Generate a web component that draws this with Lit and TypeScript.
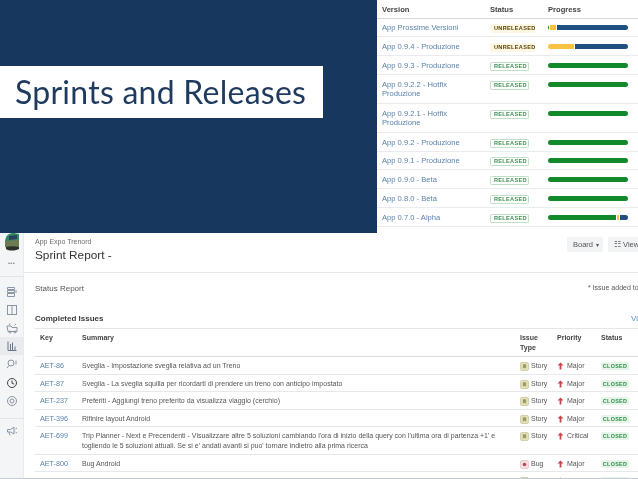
import { LitElement, html, css, svg } from "lit";
import { customElement } from "lit/decorators.js";

type Seg = [string, number];
const G = "#14892c", Y = "#f6c342", B = "#205081";
const releases: { name: string[]; status: string; segs: Seg[] }[] = [
  { name: ["App Prossime Versioni"], status: "UNRELEASED", segs: [[G, 1], ["#fff", 1], [Y, 6], ["#fff", 1], [B, 71]] },
  { name: ["App 0.9.4 - Produzione"], status: "UNRELEASED", segs: [[Y, 26], ["#fff", 1], [B, 53]] },
  { name: ["App 0.9.3 - Produzione"], status: "RELEASED", segs: [[G, 80]] },
  { name: ["App 0.9.2.2 - Hotfix", "Produzione"], status: "RELEASED", segs: [[G, 80]] },
  { name: ["App 0.9.2.1 - Hotfix", "Produzione"], status: "RELEASED", segs: [[G, 80]] },
  { name: ["App 0.9.2 - Produzione"], status: "RELEASED", segs: [[G, 80]] },
  { name: ["App 0.9.1 - Produzione"], status: "RELEASED", segs: [[G, 80]] },
  { name: ["App 0.9.0 - Beta"], status: "RELEASED", segs: [[G, 80]] },
  { name: ["App 0.8.0 - Beta"], status: "RELEASED", segs: [[G, 80]] },
  { name: ["App 0.7.0 - Alpha"], status: "RELEASED", segs: [[G, 68], ["#fff", 1], [Y, 2], ["#fff", 1], [B, 8]] },
];

const issues = [
  { key: "AET-86", sum: ["Sveglia - Impostazione sveglia relativa ad un Treno"], type: "Story", pri: "Major" },
  { key: "AET-87", sum: ["Sveglia - La sveglia squilla per ricordarti di prendere un treno con anticipo impostato"], type: "Story", pri: "Major" },
  { key: "AET-237", sum: ["Preferiti - Aggiungi treno preferito da visualizza viaggio (cerchio)"], type: "Story", pri: "Major" },
  { key: "AET-396", sum: ["Rifinire layout Android"], type: "Story", pri: "Major" },
  { key: "AET-699", sum: ["Trip Planner - Next e Precendenti - Visualizzare altre 5 soluzioni cambiando l'ora di inizio della query con l'ultima ora di partenza +1' e", "togliendo le 5 soluzioni attuali. Se si e' andati avanti si puo' tornare indietro alla prima ricerca"], type: "Story", pri: "Critical" },
  { key: "AET-800", sum: ["Bug Android"], type: "Bug", pri: "Major" },
  { key: "AET-844", sum: ["Test UI/UX"], type: "Story", pri: "Major" },
];

const navIcon = (body: unknown, active = false) => html`<div class="nav ${active ? "active" : ""}"><svg width="14" height="14" viewBox="0 0 14 14" fill="none" stroke="#8b95a3" stroke-width="1">${body}</svg></div>`;

@customElement("app-root")
export class AppRoot extends LitElement {
  static styles = css`
    :host { display: block; width: 638px; height: 479px; overflow: hidden; background: #fff; font-family: "Liberation Sans", Arial, sans-serif; }
    .top { display: flex; height: 233px; background: #17375e; }
    .hero { flex: 1; padding-top: 66px; }
    .title { width: 323px; height: 52px; box-sizing: border-box; background: #fff; padding-left: 15px; font: 32px/51px Lato, sans-serif; letter-spacing: 0.25px; color: #1f3a5f; white-space: nowrap; filter: blur(0.2px); }
    .rel { width: 261px; background: #fff; box-sizing: border-box; overflow: hidden; filter: blur(0.5px); }
    .r { display: grid; grid-template-columns: 108px 58px 80px; padding-left: 5px; border-bottom: 1px solid #e9ebee; box-sizing: border-box; height: 18.8px; font-size: 7.6px; line-height: 9.5px; color: #5a82ad; padding-top: 4.7px; }
    .r.tall { height: 29px; }
    .r.head { height: 18.5px; font-weight: bold; color: #444; border-bottom-color: #d5d8dc; }
    .vname span { display: block; }
    .badge { display: inline-block; height: 9px; line-height: 9px; font-size: 5.6px; font-weight: bold; letter-spacing: 0.3px; box-sizing: border-box; padding: 0 0 0 4px; border-radius: 1.5px; white-space: nowrap; }
    .RELEASED { width: 39px; border: 1px solid #bfdec5; color: #3f8f50; line-height: 7px; padding-left: 3px; }
    .UNRELEASED { width: 45px; background: #fdf8e6; color: #594300; }
    .bar { display: flex; height: 5px; margin-top: 2px; border-radius: 2.5px; overflow: hidden; }
    .bar i { display: block; height: 100%; }
    .bottom { display: flex; height: 246px; box-sizing: border-box; border-bottom: 1.5px solid #c5ccd3; filter: blur(0.5px); background: #fff; overflow: hidden; }
    .side { width: 24px; flex: none; background: #f4f5f7; border-right: 1px solid #e8eaed; box-sizing: border-box; display: flex; flex-direction: column; align-items: center; }
    .avatar { height: 18px; flex: none; }
    .dots { height: 26px; flex: none; box-sizing: border-box; padding-top: 8px; font-size: 6px; line-height: 8px; letter-spacing: 0.3px; color: #8a8f96; font-weight: bold; align-self: stretch; text-align: center; border-bottom: 1px solid #e3e5e8; }
    .nav { height: 18.1px; width: 100%; display: flex; align-items: center; justify-content: center; }
    .nav.active { background: #e9ebef; }
    .navs { padding-top: 6px; width: 100%; padding-bottom: 8px; border-bottom: 1px solid #e3e5e8; }
    .speak { padding-top: 3px; width: 100%; }
    .main { width: 620px; flex: none; overflow: hidden; }
    .phead { display: flex; justify-content: space-between; height: 40px; box-sizing: border-box; padding: 4px 0 0 11px; border-bottom: 1px solid #e6e8eb; }
    .crumb { font-size: 7px; line-height: 9px; color: #6b6b6b; }
    .h1 { font-size: 11.8px; line-height: 18px; color: #333; }
    .btns { display: flex; gap: 5px; }
    .btn { height: 15px; width: 36px; background: #f2f3f5; border-radius: 2px; font-size: 7.5px; line-height: 15px; color: #555; padding: 0 6px; box-sizing: border-box; display: flex; gap: 3px; align-items: center; white-space: nowrap; }
    .sub { display: flex; justify-content: space-between; height: 31px; box-sizing: border-box; padding: 11px 4px 0 11px; font-size: 8px; line-height: 10px; color: #555; }
    .note { font-size: 7px; width: 52px; white-space: nowrap; overflow: hidden; margin-top: -1px; }
    .sechead { display: flex; justify-content: space-between; height: 25px; box-sizing: border-box; margin-left: 11px; padding-top: 10px; font-size: 8px; line-height: 10px; font-weight: bold; color: #3a3a3a; border-bottom: 1px solid #e4e6e9; }
    .sechead a { font-weight: normal; color: #5a8fbb; width: 13px; overflow: hidden; }
    .table { margin-left: 11px; }
    .t { display: grid; grid-template-columns: 42px 438px 37px 44px 38px; padding-left: 5px; box-sizing: border-box; height: 17.5px; border-bottom: 1px solid #e6e8eb; font-size: 7px; line-height: 10px; color: #555; padding-top: 4px; }
    .t.tall { height: 27.5px; }
    .t.head { height: 28px; font-weight: bold; color: #444; border-bottom: 1px solid #d8dbdf; }
    .k { color: #5a82ad; font-size: 7.2px; }
    .s { white-space: nowrap; }
    .s span { display: block; }
    .ic { display: flex; align-items: flex-start; gap: 3px; }
    .ic.ty { gap: 2px; }
    .ic svg { margin-top: 1px; flex: none; }
    .lz { display: inline-block; height: 8px; width: 28px; background: #e7f4ea; border-radius: 1.5px; font-size: 5.4px; line-height: 8px; font-weight: bold; color: #2f8f45; text-align: center; letter-spacing: 0.3px; margin-top: 1px; }
  `;

  private story() {
    return svg`<rect x="0.5" y="0.5" width="7" height="7" rx="1" fill="#e6e4b8" stroke="#bdbb92" stroke-width="0.6"/><path d="M2.5 2h3v4L4 5 2.5 6z" fill="#9a9a6a"/>`;
  }
  private bug() {
    return svg`<rect x="0.5" y="0.5" width="7" height="7" rx="1" fill="#f5e3e3" stroke="#ddb9b9" stroke-width="0.6"/><circle cx="4" cy="4" r="1.6" fill="#c8434a"/>`;
  }

  render() {
    return html`
      <section class="top">
        <div class="hero"><div class="title">Sprints and Releases</div></div>
        <div class="rel">
          <div class="r head"><span>Version</span><span>Status</span><span>Progress</span></div>
          ${releases.map(r => html`<div class="r ${r.name.length > 1 ? "tall" : ""}">
            <div class="vname">${r.name.map(n => html`<span>${n}</span>`)}</div>
            <div><span class="badge ${r.status}">${r.status}</span></div>
            <div class="bar">${r.segs.map(([c, w]) => html`<i style="background:${c};width:${w}px"></i>`)}</div>
          </div>`)}
        </div>
      </section>
      <section class="bottom">
        <aside class="side">
          <svg class="avatar" width="16" height="18" viewBox="0 0 16 18">
            <path d="M1 8 C2 1 6 0 10 0 L15 1 L15 8Z" fill="#2f8a60"/>
            <path d="M5 3 L13 2 L13 6 L5 7Z" fill="#2c3f66"/>
            <path d="M1 8 L15 7 L15 14 C11 16 5 16 1 14Z" fill="#6f7a54"/>
            <path d="M2 14 C6 13 11 13 15 14 L15 16 C10 18 5 18 2 16Z" fill="#2b3128"/>
          </svg>
          <div class="dots">•••</div>
          <div class="navs">
            ${navIcon(svg`<path d="M2.5 2.5h7v2h-7zM2.5 5.5h7v2h-7zM2.5 8.5h7v3h-7zM11 5v3"/>`)}
            ${navIcon(svg`<rect x="2.5" y="2.5" width="9" height="9"/><path d="M7 2.5v9"/>`)}
            ${navIcon(svg`<path d="M2 5h4l1 1.5h5v4H3zM4 4l1-1.5M9.5 4.5 11 3"/><circle cx="5" cy="11" r="1"/><circle cx="10" cy="11" r="1"/>`)}
            ${navIcon(svg`<path d="M3 2.5v9h8.5M5.5 11V5M7.5 11V3.5M10 11V7.5" stroke="#6a7688"/>`, true)}
            ${navIcon(svg`<circle cx="6" cy="6" r="3"/><path d="M4 8.5 2 11M11 3.5v4"/>`)}
            ${navIcon(svg`<circle cx="7" cy="7" r="4.5" stroke="#444"/><path d="M7 4.5V7.2L9.2 8.2" stroke="#444"/>`)}
            ${navIcon(svg`<circle cx="7" cy="7" r="4.5"/><circle cx="7" cy="7" r="2"/>`)}
          </div>
          <div class="speak">${navIcon(svg`<path d="M2.5 5.5h3L9 3v7L5.5 8h-3zM4 8l1 3.5M10.5 5l1.5-1M10.5 8l1.5 1"/>`)}</div>
        </aside>
        <div class="main">
          <div class="phead">
            <div>
              <div class="crumb">App Expo Trenord</div>
              <div class="h1">Sprint Report -</div>
            </div>
            <div class="btns">
              <div class="btn">Board <small>▾</small></div>
              <div class="btn">☷ View</div>
            </div>
          </div>
          <div class="sub"><span>Status Report</span><span class="note">* Issue added to</span></div>
          <div class="sechead"><span>Completed Issues</span><a>Vi</a></div>
          <div class="table">
            <div class="t head"><span>Key</span><span>Summary</span><span>Issue<br />Type</span><span>Priority</span><span>Status</span></div>
            ${issues.map(i => html`<div class="t ${i.sum.length > 1 ? "tall" : ""}">
              <span class="k">${i.key}</span>
              <div class="s">${i.sum.map(l => html`<span>${l}</span>`)}</div>
              <div class="ic ty"><svg width="9" height="9" viewBox="0 0 8 8">${i.type === "Bug" ? this.bug() : this.story()}</svg>${i.type}</div>
              <div class="ic"><svg width="7" height="8" viewBox="0 0 7 8"><path d="M3.5 0.5 6.5 3.5H4.4V7.5H2.6V3.5H0.5Z" fill="#c8434a"/></svg>${i.pri}</div>
              <div><span class="lz">CLOSED</span></div>
            </div>`)}
          </div>
        </div>
      </section>`;
  }
}
